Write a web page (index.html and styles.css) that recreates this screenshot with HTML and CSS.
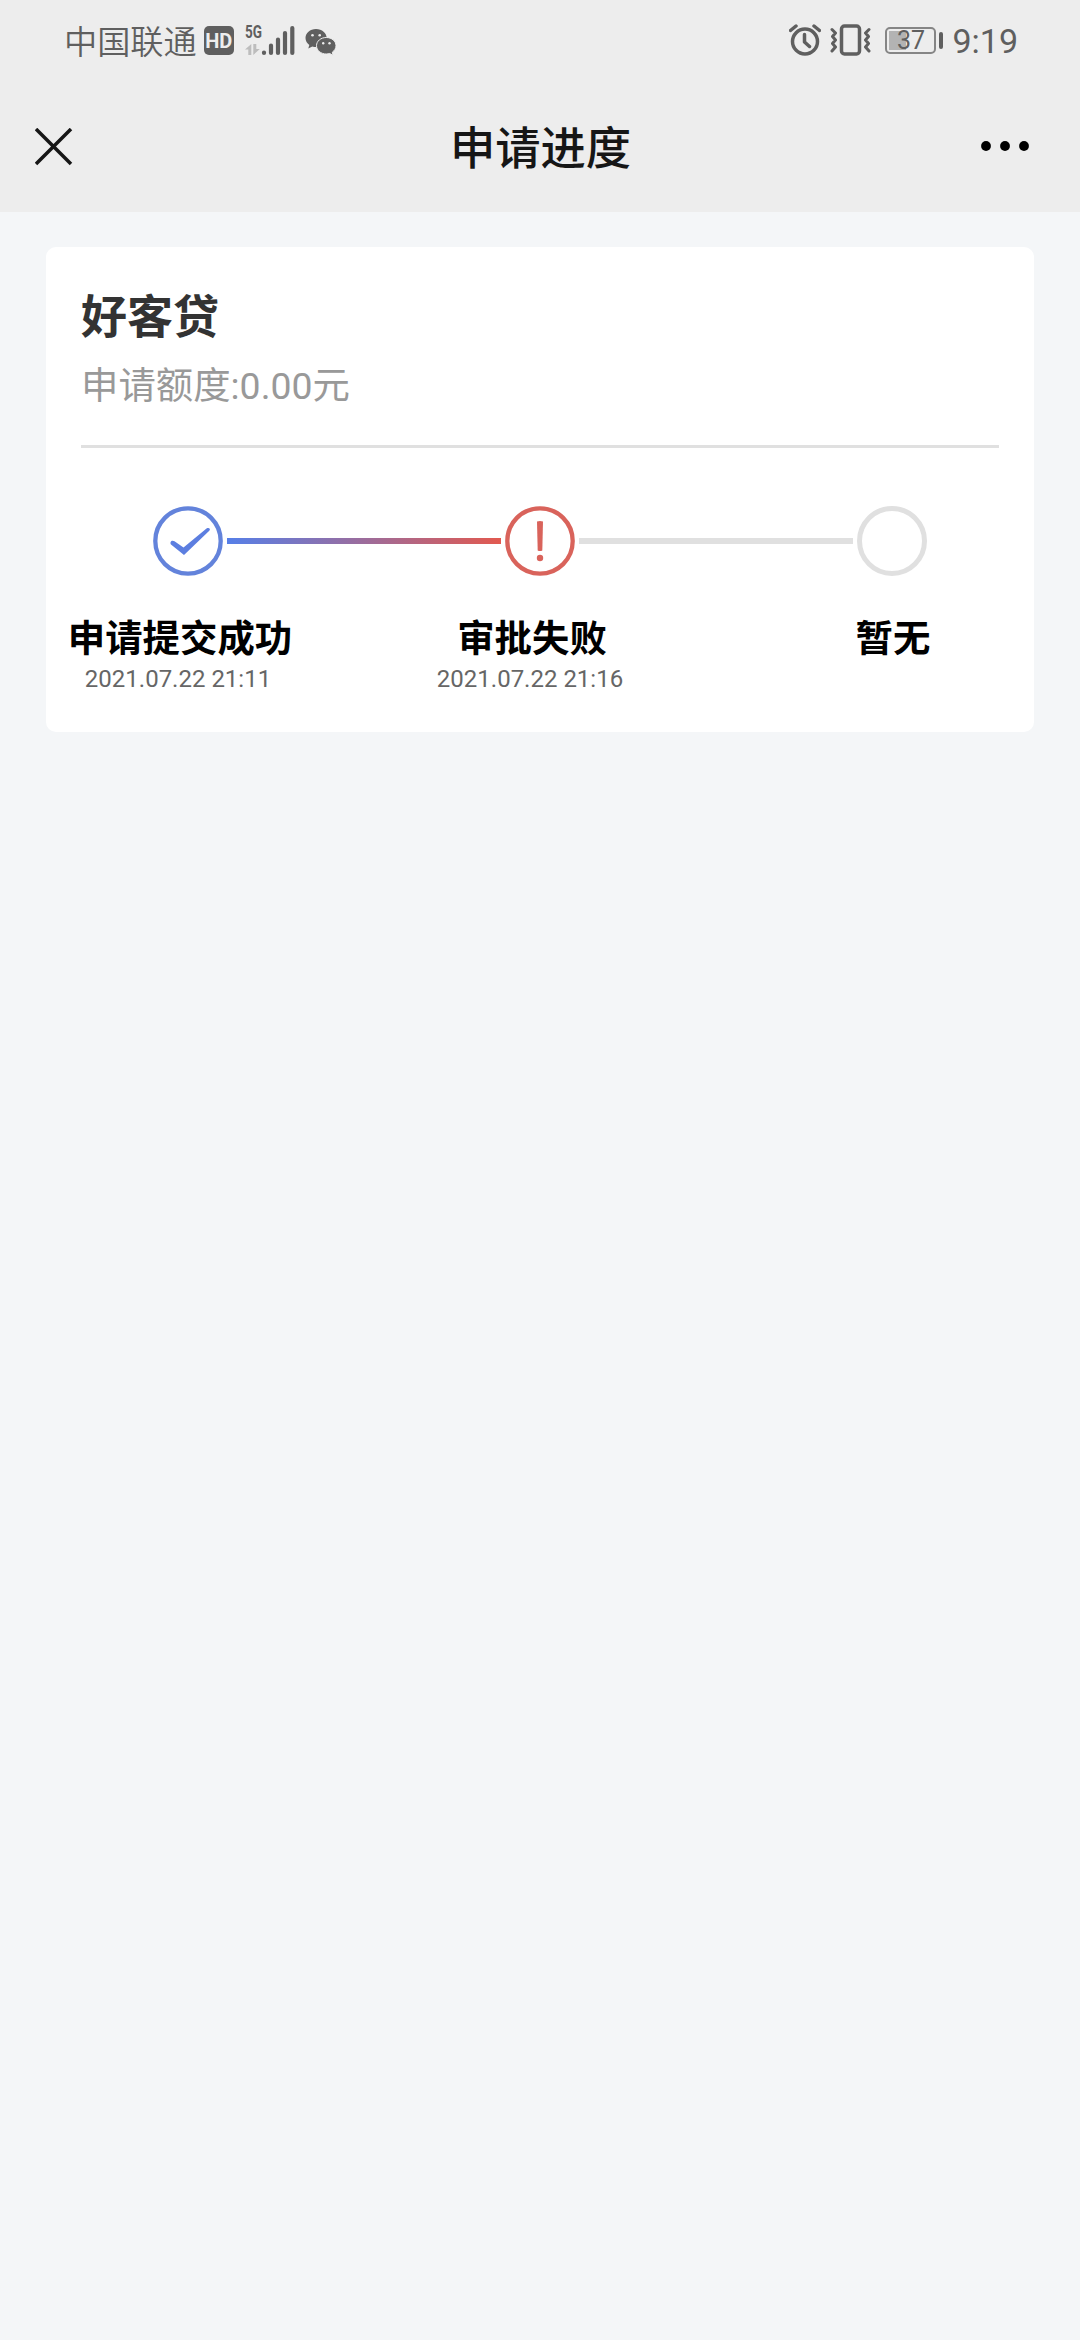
FILE: index.html
```html
<!DOCTYPE html>
<html lang="zh-CN">
<head>
<meta charset="utf-8">
<title>申请进度</title>
<link rel="stylesheet" href="styles.css">
</head>
<body>
<header class="top">
  <div class="status">
    <div class="status-left">
      <span class="carrier">中国联通</span>
      <span class="hd">HD</span>
      <svg class="signal" width="50" height="40" viewBox="0 -8 50 40">
        <text x="0" y="14" class="net" textLength="17" lengthAdjust="spacingAndGlyphs">5G</text>
        <path d="M3.300 31V25.500H0L6.300 20V31ZM8.300 20H11.300V25H14.800L8.300 31Z" class="data"/>
        <path d="M19 28.500V29M26 21.500V29M33 15.500V29M40 9V29M47.300 4V29" class="bars"/>
      </svg>
      <svg class="wechat" width="32" height="28" viewBox="0 0 32 28">
        <path d="M11 1C5 1 .5 5 .5 10c0 3 1.500 5.300 3.800 7L3.300 20.500 7.300 18.500C8.500 18.900 9.700 19 11 19c6 0 10.700-4 10.700-9S17 1 11 1Z" class="solid"/>
        <path d="M21.300 9.500c-5.500 0-9.800 3.600-9.800 8.200s4.300 8.300 9.800 8.300c1.200 0 2.300-.2 3.400-.5l3.400 1.800-.8-3.100c2.200-1.500 3.700-3.800 3.700-6.500 0-4.600-4.300-8.200-9.700-8.200Z" class="solid front"/>
        <g class="eye"><circle cx="7.500" cy="7.300" r="1.300"/><circle cx="14.700" cy="7.300" r="1.300"/><circle cx="18.200" cy="15.300" r="1.200"/><circle cx="24.500" cy="15.300" r="1.200"/></g>
      </svg>
    </div>
    <div class="status-right">
      <svg width="32" height="32" viewBox="0 0 32 32" class="line-icon alarm">
        <circle cx="16" cy="17.500" r="12.500"/><path d="M15.500 10.500V18L20.500 22.500M1.500 6.500 7 2M25 2l5.500 4.500"/>
      </svg>
      <svg width="41" height="32" viewBox="0 0 41 32" class="line-icon vibrate">
        <rect x="11.500" y="2" width="18" height="28" rx="3"/><path class="zig" d="M2 5.500 5.500 9 2.500 12.500 5.500 16 2.500 19.500 5.500 23 2 27M39 5.500 35.500 9 38.500 12.500 35.500 16 38.500 19.500 35.500 23 39 27"/>
      </svg>
      <div class="battery"><div class="battery-body"><span class="battery-num">37</span></div><i class="battery-cap"></i></div>
      <span class="time">9:19</span>
    </div>
  </div>
  <nav class="nav">
    <svg width="38" height="38" viewBox="0 0 38 38" class="close"><path d="M1 1 36 36M36 1 1 36"/></svg>
    <h1 class="nav-title">申请进度</h1>
    <svg width="48" height="10" viewBox="0 0 48 10" class="more"><circle cx="5" cy="5" r="4.900"/><circle cx="24" cy="5" r="4.900"/><circle cx="43" cy="5" r="4.900"/></svg>
  </nav>
</header>
<main class="card">
  <div class="summary">
    <h2 class="product">好客贷</h2>
    <p class="amount">申请额度:0.00元</p>
  </div>
  <div class="track">
    <svg width="70" height="70" viewBox="0 0 70 70">
      <circle cx="35" cy="35" r="32.700" class="ring done"/>
      <path d="M18 38.500C16.500 36 18.500 33.500 21.500 35.200L30.500 41.500 53.500 22.500C56 21 58 23 56.300 24.800L31 49Z" class="check"/>
    </svg>
    <i class="link active"></i>
    <svg width="70" height="70" viewBox="0 0 70 70">
      <circle cx="35" cy="35" r="32.700" class="ring failed"/>
      <path d="M32 15.500Q35 14.500 38 15.500L37.300 44.500Q35 45.500 32.700 44.500Z" class="bang"/><circle cx="35" cy="52" r="3.200" class="bang"/>
    </svg>
    <i class="link"></i>
    <svg width="70" height="70" viewBox="0 0 70 70"><circle cx="35" cy="35" r="32.500" class="ring"/></svg>
  </div>
  <div class="labels">
    <div class="step"><strong class="step-name">申请提交成功</strong><time class="step-time">2021.07.22 21:11</time></div>
    <div class="step"><strong class="step-name">审批失败</strong><time class="step-time">2021.07.22 21:16</time></div>
    <div class="step last"><strong class="step-name">暂无</strong></div>
  </div>
</main>
</body>
</html>
```

FILE: styles.css
```css
* { box-sizing: border-box; }
body {
  margin: 0;
  min-height: 2340px;
  background: #f4f6f8;
  font-family: Roboto, "Noto Sans CJK SC", sans-serif;
}
svg { display: block; flex: none; }
h1, h2, p { margin: 0; }

.top { height: 212px; background: #ededed; }
.status {
  display: flex;
  justify-content: space-between;
  height: 80px;
  padding: 0 62px 0 64px;
  color: #5f5f5f;
}
.status-left, .status-right { display: flex; align-items: center; }
.carrier { font-size: 33.200px; font-weight: 350; line-height: 77px; padding-top: 4px; }
.hd {
  width: 30px;
  height: 29px;
  margin-left: 7px;
  border-radius: 5px;
  background: #5f5f5f;
  color: #ededed;
  font-size: 20px;
  font-weight: 700;
  line-height: 30px;
  text-align: center;
}
.signal { margin: -8px 0 0 11px; }
.net { font: 700 18px Roboto, sans-serif; fill: #5f5f5f; }
.data { fill: #bdbdbd; }
.bars { stroke: #5f5f5f; stroke-width: 4.200; stroke-linecap: round; }
.wechat { margin: 3px 0 0 10px; }
.solid { fill: #5f5f5f; }
.front { stroke: #ededed; stroke-width: 1; }
.eye { fill: #ededed; }
.line-icon { fill: none; stroke: #5f5f5f; stroke-width: 3.500; stroke-linecap: round; stroke-linejoin: round; }
.vibrate { margin-left: 9px; }
.zig { stroke-width: 3; }
.battery { display: flex; align-items: center; margin-left: 14px; gap: 3px; }
.battery-body {
  width: 51px;
  height: 27px;
  border: 2px solid #858585;
  border-radius: 5px;
  background: linear-gradient(#b3b3b3, #b3b3b3) 2px 2px / 17px 19px no-repeat;
  text-align: center;
}
.battery-num { display: block; font-size: 25px; line-height: 24px; }
.battery-cap { width: 4px; height: 17px; border-radius: 2px; background: #5f5f5f; }
.time { margin-left: 9px; font-size: 34px; line-height: 78px; padding-top: 2px; }

.nav {
  display: grid;
  grid-template-columns: 100px 1fr 100px;
  align-items: center;
  height: 132px;
  padding: 0 51px 0 35px;
}
.close { margin-top: 1px; fill: none; stroke: #161616; stroke-width: 3.500; }
.nav-title { color: #161616; font-size: 45.300px; font-weight: 500; line-height: 66px; text-align: center; padding: 8px 0 0 17px; }
.more { justify-self: end; }

.card {
  width: 988px;
  height: 485px;
  margin: 35px auto 0;
  border-radius: 10px;
  background: #fff;
}
.summary {
  height: 201px;
  margin: 0 35px;
  padding-top: 36px;
  border-bottom: 3px solid #e0e0e0;
}
.product { color: #333; font-size: 46px; font-weight: 700; line-height: 68px; }
.amount { color: #999; font-size: 37.400px; line-height: 56px; margin-top: 7px; }

.track { display: flex; align-items: center; gap: 4px; padding: 58px 0 0 107px; }
.ring { fill: none; stroke: #e0e0e0; stroke-width: 5; }
.done { stroke: #6383db; stroke-width: 4.300; }
.failed { stroke: #d9635b; stroke-width: 4.300; }
.check { fill: #5c7ee0; }
.bang { fill: #d9635b; }
.link { width: 274px; height: 6px; background: #e0e0e0; }
.active { background: linear-gradient(90deg, #567fe8, #e2594f); }

.labels { display: flex; gap: 128px; padding: 36px 0 0 22px; }
.step { display: flex; flex-direction: column; align-items: center; width: 224px; }
.last { margin-left: 9px; }
.step-name { color: #000; font-size: 37.400px; font-weight: 700; line-height: 54px; white-space: nowrap; }
.step-time { color: #666; font-size: 24px; line-height: 26px; padding-right: 4px; white-space: nowrap; }
```
